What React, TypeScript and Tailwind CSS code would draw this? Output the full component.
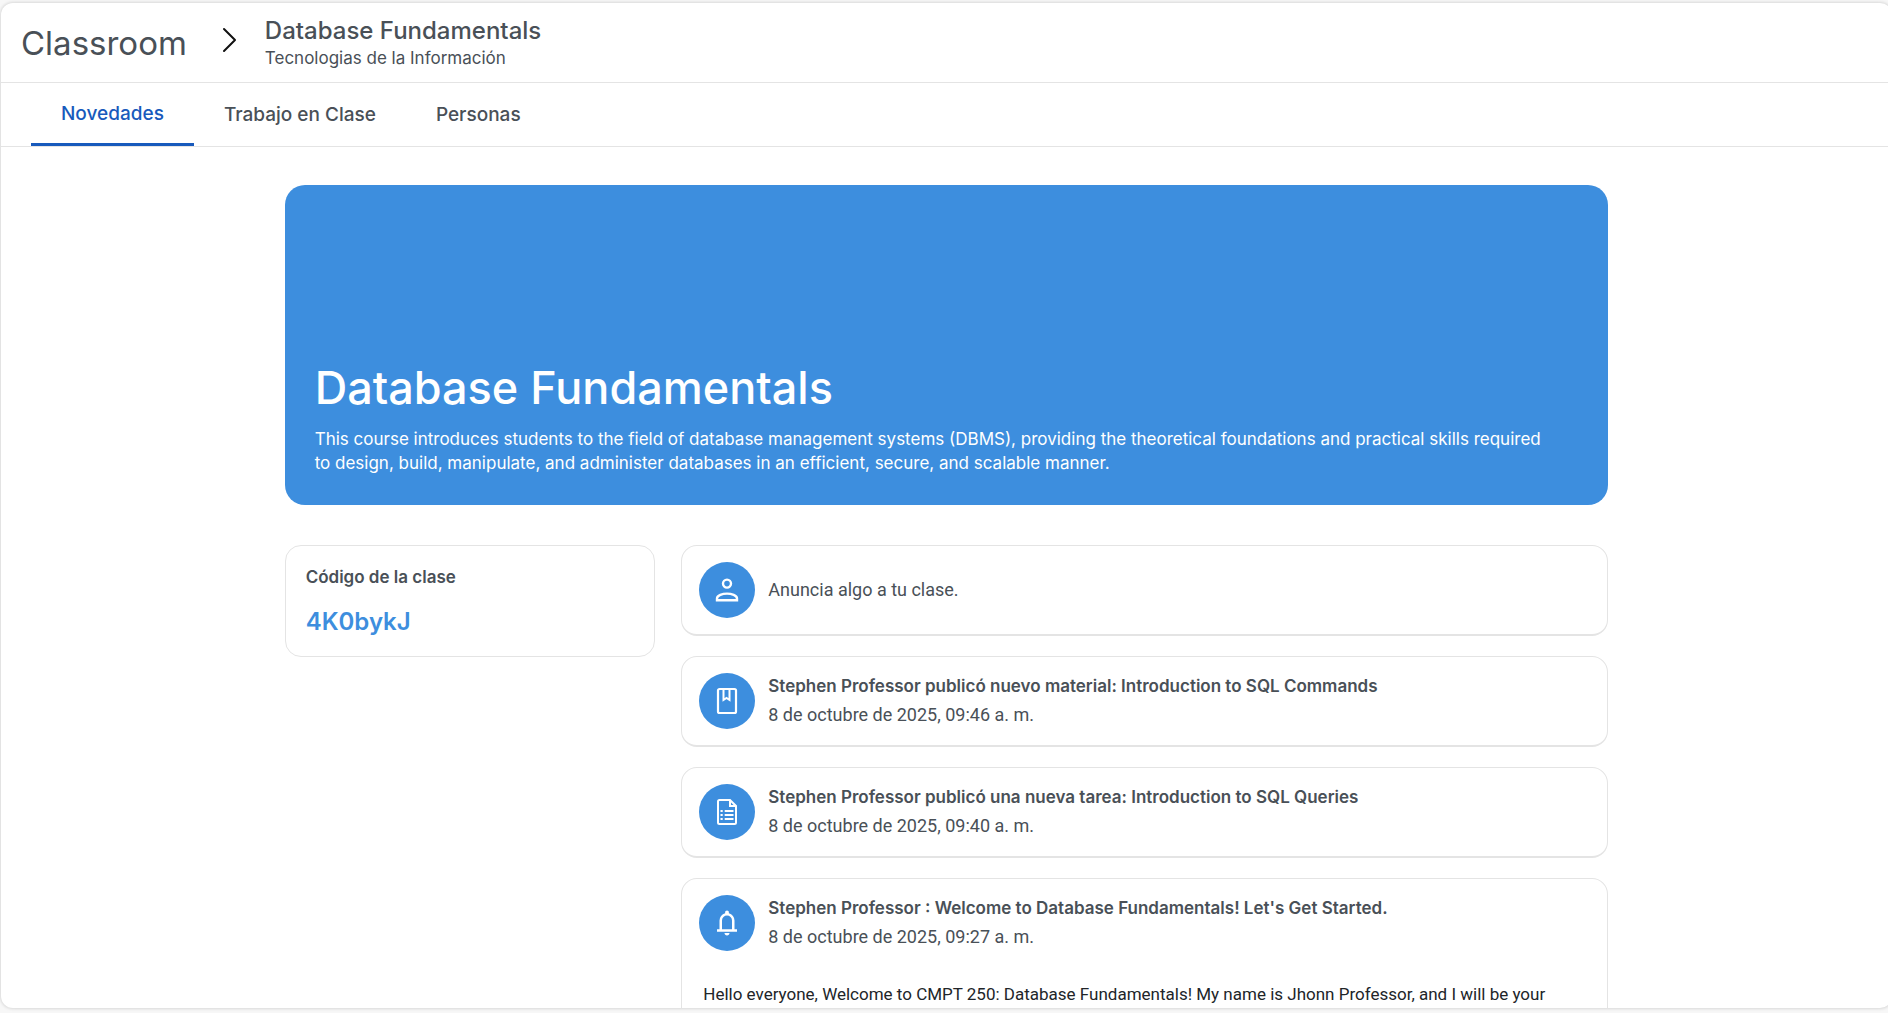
import type { ReactNode } from "react";

const inter = "font-['Inter',sans-serif]";

function PersonIcon() {
  return (
    <svg viewBox="0 0 28 28" className="size-7" fill="none" stroke="currentColor" strokeWidth="2.4" aria-hidden="true">
      <circle cx="14" cy="7.6" r="4" />
      <path d="M4 24.200v-1.700C4 19.500 9.500 17.600 14 17.600s10 1.900 10 4.900v1.700z" />
    </svg>
  );
}

function BookIcon() {
  return (
    <svg viewBox="0 0 28 28" className="size-7" fill="none" stroke="currentColor" strokeWidth="2.2" aria-hidden="true">
      <rect x="5" y="2" width="18" height="24" rx="1.5" />
      <path d="M10.500 2v11l3-2 3 2V2" strokeWidth="2" />
    </svg>
  );
}

function TaskIcon() {
  return (
    <svg viewBox="0 0 28 28" className="size-7" fill="none" stroke="currentColor" strokeWidth="2" aria-hidden="true">
      <path d="M17 2H6.500A1.500 1.500 0 0 0 5 3.500v21A1.500 1.500 0 0 0 6.500 26h15a1.500 1.500 0 0 0 1.500-1.500V8zM17 2v6h6" />
      <path d="M7.500 13h2.200M11.700 13h8.800M7.500 17h2.200M11.700 17h8.800M7.500 21h2.200M11.700 21h8.800" />
    </svg>
  );
}

function BellIcon() {
  return (
    <svg viewBox="0 0 24 24" className="size-[30px]" fill="currentColor" aria-hidden="true">
      <path d="M4 19v-2h2v-7q0-2.075 1.250-3.687T10.500 4.200v-.7q0-.625.438-1.062T12 2t1.063.438T13.500 3.500v.7q2 .5 3.250 2.113T18 10v7h2v2zm8 3q-.825 0-1.412-.587T10 20h4q0 .825-.587 1.413T12 22m-4-5h8v-7q0-1.650-1.175-2.825T12 6 9.175 7.175 8 10z" />
    </svg>
  );
}

function Avatar({ children }: { children: ReactNode }) {
  return (
    <span className="flex size-14 shrink-0 items-center justify-center rounded-full bg-[#3d8ede] text-white">
      {children}
    </span>
  );
}

function Post({ icon, title, date, body }: { icon: ReactNode; title: string; date: string; body?: string }) {
  return (
    <article className="rounded-2xl border border-b-2 border-[#e4e4e4] px-[17px] py-4">
      <div className="flex items-center gap-[13px]">
        <Avatar>{icon}</Avatar>
        <div className="flex flex-col gap-0.5">
          <h3 className={`${inter} text-[17px] leading-[26px] font-semibold`}>{title}</h3>
          <p className="text-[18px] leading-[28px]">{date}</p>
        </div>
      </div>
      {body && <p className="mt-7 px-1 text-[17px] leading-[30px] text-[#212529]">{body}</p>}
    </article>
  );
}

const posts = [
  {
    icon: <BookIcon />,
    title: "Stephen Professor publicó nuevo material: Introduction to SQL Commands",
    date: "8 de octubre de 2025, 09:46 a. m.",
  },
  {
    icon: <TaskIcon />,
    title: "Stephen Professor publicó una nueva tarea: Introduction to SQL Queries",
    date: "8 de octubre de 2025, 09:40 a. m.",
  },
  {
    icon: <BellIcon />,
    title: "Stephen Professor : Welcome to Database Fundamentals! Let's Get Started.",
    date: "8 de octubre de 2025, 09:27 a. m.",
    body: "Hello everyone, Welcome to CMPT 250: Database Fundamentals! My name is Jhonn Professor, and I will be your",
  },
];

export default function App() {
  return (
    <div className="flex h-screen overflow-hidden bg-[#f7f7f7] pt-[3px] pb-[5px] pl-px font-['Roboto',sans-serif] text-[#495057]">
      <div className="-mr-1 flex flex-1 flex-col overflow-hidden rounded-xl bg-white shadow-[0_0_3px_1px_rgba(0,0,0,0.12)]">
        <header className={`${inter} flex h-20 shrink-0 items-center border-b border-[#e4e4e4] pl-5`}>
          <a href="#" className="text-[33px] leading-10">Classroom</a>
          <svg viewBox="0 0 16 32" className="mr-7 ml-[34px] h-8 w-4" fill="none" stroke="#111" strokeWidth="2" strokeLinecap="round" strokeLinejoin="round" aria-hidden="true">
            <path d="M3 2l11 11L3 24" />
          </svg>
          <div className="pt-0.5">
            <h1 className="text-[24px] leading-7 font-medium">Database Fundamentals</h1>
            <p className="text-[17px] leading-[26px]">Tecnologias de la Información</p>
          </div>
        </header>
        <nav className={`${inter} flex h-16 shrink-0 border-b border-[#e4e4e4] pl-[30px] text-[19px] font-medium`}>
          <button className="border-b-[3px] border-[#185abc] px-[30px] pt-0.5 text-[#185abc]">Novedades</button>
          <button className="px-[30px] pt-0.5">Trabajo en Clase</button>
          <button className="px-[30px] pt-0.5">Personas</button>
        </nav>
        <main className="mx-auto flex min-h-0 w-[70%] flex-1 flex-col gap-10 pt-[38px]">
          <section className={`${inter} flex h-80 shrink-0 flex-col justify-end rounded-[20px] bg-[#3d8ede] px-[30px] pb-[30px] text-white`}>
            <h2 className="text-[45px] leading-[54px] font-medium">Database Fundamentals</h2>
            <p className="mt-3 pr-6 text-[17px] leading-6">
              This course introduces students to the field of database management systems (DBMS), providing the theoretical foundations and practical skills required to design, build, manipulate, and administer databases in an efficient, secure, and scalable manner.
            </p>
          </section>
          <div className="flex items-start gap-[26px]">
            <aside className={`${inter} w-[28%] rounded-2xl border border-[#e4e4e4] px-5 py-4`}>
              <h3 className="text-[17px] leading-[30px] font-semibold">Código de la clase</h3>
              <p className="mt-3 text-[24px] leading-9 font-semibold text-[#3d8ede]">4K0bykJ</p>
            </aside>
            <div className="flex flex-1 flex-col gap-5">
              <button className="flex items-center gap-[13px] rounded-2xl border border-b-2 border-[#e4e4e4] px-[17px] py-4 text-left text-[18px] leading-[28px]">
                <Avatar><PersonIcon /></Avatar>
                Anuncia algo a tu clase.
              </button>
              {posts.map((post) => (
                <Post key={post.date} {...post} />
              ))}
            </div>
          </div>
        </main>
      </div>
    </div>
  );
}
